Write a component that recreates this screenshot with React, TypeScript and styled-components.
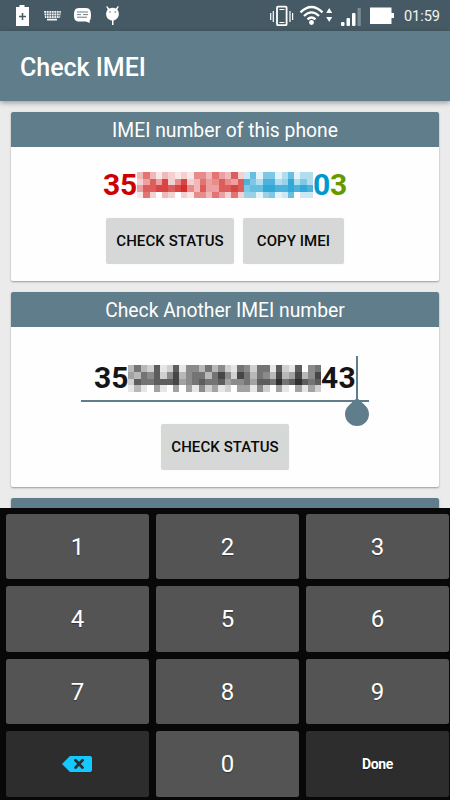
import React from "react";
import styled, { createGlobalStyle } from "styled-components";

const Global = createGlobalStyle`
  *{box-sizing:border-box}
  html,body{margin:0;padding:0;background:#ebebeb}
  body{font-family:Roboto,"Noto Sans",sans-serif;overflow:hidden}
  button{font-family:inherit;border:0;margin:0;padding:0}
`;
const Screen = styled.div`
  width:450px;height:800px;display:flex;flex-direction:column;overflow:hidden;background:#ebebeb;
`;
const StatusBar = styled.header`
  height:31px;flex:none;background:#455a64;display:flex;justify-content:space-between;color:#fff;
`;
const Clock = styled.span`
  font-size:14.6px;line-height:33px;width:46px;flex:none;white-space:nowrap;letter-spacing:-.1px;color:#f2f4f5;
`;
const StatusRight = styled.div`display:flex;`;
const AppBar = styled.div`
  height:70px;flex:none;background:#607d8b;color:#fff;padding:3px 20px 0;display:flex;align-items:center;
  box-shadow:0 2px 5px rgba(0,0,0,.32);position:relative;z-index:1;
`;
const Title = styled.h1`margin:0;font-size:25px;font-weight:500;letter-spacing:-.02px;`;
const Content = styled.main`
  height:407px;flex:none;overflow:hidden;padding:11px 11px 0 11px;display:flex;flex-direction:column;gap:11px;
`;
const Card = styled.section<{ $h: number }>`
  width:428px;height:${p => p.$h}px;flex:none;background:#fefefe;border-radius:2px;
  box-shadow:0 1px 2px rgba(0,0,0,.35);display:flex;flex-direction:column;align-items:center;
`;
const CardHeader = styled.h2`
  margin:0;width:100%;height:35px;flex:none;background:#607d8b;color:#fff;border-radius:2px 2px 0 0;
  font-size:19.3px;font-weight:400;line-height:37px;text-align:center;
`;
const ImeiRow = styled.div<{ $top: number }>`
  margin-top:${p => p.$top}px;height:36px;display:flex;align-items:center;font-size:30px;font-weight:700;line-height:38px;
`;
const Digits = styled.span<{ $c: string; $w: number; $track?: number }>`
  color:${p => p.$c};width:${p => p.$w}px;flex:none;white-space:nowrap;letter-spacing:${p => p.$track ?? -0.3}px;
`;
const ButtonRow = styled.div<{ $top: number }>`
  display:flex;gap:9px;margin-top:${p => p.$top}px;
`;
const ActionButton = styled.button<{ $w: number }>`
  width:${p => p.$w}px;height:46px;border-radius:2.5px;background:#d6d8d7;color:#090909;
  font-size:15px;font-weight:500;box-shadow:0 0 1px rgba(0,0,0,.12);white-space:nowrap;letter-spacing:.08px;
`;
const Field = styled.div`
  position:relative;width:288px;height:52px;margin-top:23px;border-bottom:2px solid #607d8b;padding-left:13px;
`;
const Caret = styled.i`
  position:absolute;left:275px;top:6px;width:2px;height:44px;background:#607d8b;
`;
const Handle = styled.svg`position:absolute;left:263px;top:47px;`;
const Keyboard = styled.div`
  flex:1;background:#080808;padding:5.5px 1px 4px 6px;display:grid;
  grid-template-columns:repeat(3,143px);grid-template-rows:repeat(4,65.5px);gap:7px;
`;
const Key = styled.button<{ $dark?: boolean }>`
  background:${p => (p.$dark ? "#2d2d2d" : "#545454")};color:#fff;border-radius:2.5px;
  display:flex;align-items:center;justify-content:center;padding-top:1px;
  font-size:${p => (p.$dark ? 14 : 24)}px;font-weight:${p => (p.$dark ? 700 : 400)};
  letter-spacing:${p => (p.$dark ? "-.3px" : "normal")};
  text-shadow:0 1px 1px rgba(0,0,0,.4);
`;
const EraseIcon = styled.svg`margin-right:2px;`;
const MosaicSvg = styled.svg`flex:none;display:block;`;

type Tone = { from: number; rgb: string };
const Mosaic = ({ rows, tones, width, height }: { rows: string[]; tones: Tone[]; width: number; height: number }) => {
  const cols = rows[0].length;
  return (
    <MosaicSvg width={width} height={height} viewBox={`0 0 ${cols} 4`} preserveAspectRatio="none" shapeRendering="crispEdges">
      {rows.map((row, y) => row.split("").map((v, x) => {
        const tone = [...tones].reverse().find(t => x >= t.from)!;
        return <rect key={`${x}-${y}`} x={x} y={y} width={1} height={1} fill={tone.rgb} fillOpacity={Number(v) / 10} />;
      }))}
    </MosaicSvg>
  );
};

const phoneMask = [
  "3631321215536437226155136133",
  "2474825823645754775377348353",
  "4778878953744778756688778787",
  "1620320215536426244145126022",
];
const fieldMask = [
  "363271271553635216526617217056",
  "436572583566368528636538348358",
  "276677784567667455647769679767",
  "131041040415241204415204104142",
];

const LeftIcons = () => (
  <svg width="140" height="31" viewBox="0 0 140 31" fill="#fff">
    <path d="M16 7h3.5V5h5v2H29v19H16z" />
    <path d="M22.5 13v7M19 16.5h7" stroke="#455a64" strokeWidth="1.5" />
    <path d="M44 11h17l-1 7H45zM47 18.8h10v1.6H47z" opacity=".94" />
    <path d="M44 13.2h17M44 15.7h17M46.5 11v7M49 11v7M51.5 11v7M54 11v7M56.5 11v7M59 11v7" stroke="#455a64" strokeWidth=".65" />
    <path d="M79 8h7c4 0 5 3 5 7 0 3-.4 5-1.5 6l.3 2-4-1.5H79c-4 0-5-2.3-5-6.5s1-7 5-7z" />
    <path d="M77 12h11M77 14.6h4M83 14.6h5M77 17.2h10" stroke="#455a64" strokeWidth=".8" />
    <path d="m107 6 2.2 2.4q3.3-1.4 6.6 0L118 6l.8.7-1.5 2.8c3.3 4.1 1.2 11-4.8 11s-8.2-6.8-4.8-11l-1.5-2.8z" />
    <path d="M112 19h1.5v6H112z" /><circle cx="110" cy="12" r=".7" fill="#455a64" /><circle cx="115.2" cy="12" r=".7" fill="#455a64" />
  </svg>
);
const RightIcons = () => (
  <svg width="134" height="31" viewBox="270 0 134 31" fill="#fff">
    <rect x="277" y="6.6" width="9.6" height="18.6" rx="1" fill="none" stroke="#fff" strokeWidth="1.8" />
    <path d="M279.4 9h5v1h-5zM279.4 22h5v1h-5z" />
    <path d="M270.7 13v7M273.3 11v11M290 11v11M292.6 13v7" stroke="#fff" strokeWidth="1.2" />
    <g fill="none" stroke="#fff" strokeWidth="2.3"><path d="M300.5 12.3q11-10.5 22 0M304 16q7.5-7.2 15 0M307.5 19.4q4-3.8 8 0" /></g>
    <circle cx="311.5" cy="22.5" r="2.4" />
    <path d="m326.2 13 3-5 3 5zM326.2 17h6l-3 5z" />
    <rect x="341" y="22" width="3.5" height="4" rx="1" /><rect x="346.5" y="18" width="3.5" height="8" rx="1" />
    <rect x="352" y="13" width="3.5" height="13" rx="1" /><rect x="357.5" y="8" width="3.3" height="18" rx=".5" opacity=".3" />
    <path d="M370 7.5h21.5V13h2.5v5h-2.5v6H370z" />
  </svg>
);

export default function App() {
  return (
    <Screen>
      <Global />
      <StatusBar>
        <LeftIcons />
        <StatusRight><RightIcons /><Clock>01:59</Clock></StatusRight>
      </StatusBar>
      <AppBar><Title>Check IMEI</Title></AppBar>
      <Content>
        <Card $h={169}>
          <CardHeader>IMEI number of this phone</CardHeader>
          <ImeiRow $top={20}>
            <Digits $c="#cc0000" $w={34}>35</Digits>
            <Mosaic rows={phoneMask} tones={[{ from: 0, rgb: "#cf1717" }, { from: 17, rgb: "#0092cc" }]} width={176} height={26} />
            <Digits $c="#0099cc" $w={17}>0</Digits><Digits $c="#669900" $w={17}>3</Digits>
          </ImeiRow>
          <ButtonRow $top={15}>
            <ActionButton $w={128}>CHECK STATUS</ActionButton>
            <ActionButton $w={101}>COPY IMEI</ActionButton>
          </ButtonRow>
        </Card>
        <Card $h={195}>
          <CardHeader>Check Another IMEI number</CardHeader>
          <Field>
            <ImeiRow $top={10}>
              <Digits $c="#151515" $w={34} $track={0.1}>35</Digits>
              <Mosaic rows={fieldMask} tones={[{ from: 0, rgb: "#181818" }]} width={193} height={27} />
              <Digits $c="#151515" $w={35} $track={0.3}>43</Digits>
            </ImeiRow>
            <Caret />
            <Handle width="26" height="30" viewBox="0 0 26 30"><path d="M13 0c1 4 12 8 12 17a12 12 0 0 1-24 0C1 8 12 4 13 0z" fill="#607d8b" /></Handle>
          </Field>
          <ButtonRow $top={22}><ActionButton $w={128}>CHECK STATUS</ActionButton></ButtonRow>
        </Card>
        <Card $h={80}><CardHeader /></Card>
      </Content>
      <Keyboard>
        {[1, 2, 3, 4, 5, 6, 7, 8, 9].map(n => <Key key={n}>{n}</Key>)}
        <Key $dark aria-label="Backspace">
          <EraseIcon width="32" height="18" viewBox="0 0 32 18"><path d="m1 9 8-8h20q2 0 2 2v12q0 2-2 2H9z" fill="#13c9ff" /><path d="m14.5 5.2 7 7.4m0-7.4-7 7.4" stroke="#2d2d2d" strokeWidth="2.8" strokeLinecap="round" /></EraseIcon>
        </Key>
        <Key>0</Key><Key $dark>Done</Key>
      </Keyboard>
    </Screen>
  );
}
